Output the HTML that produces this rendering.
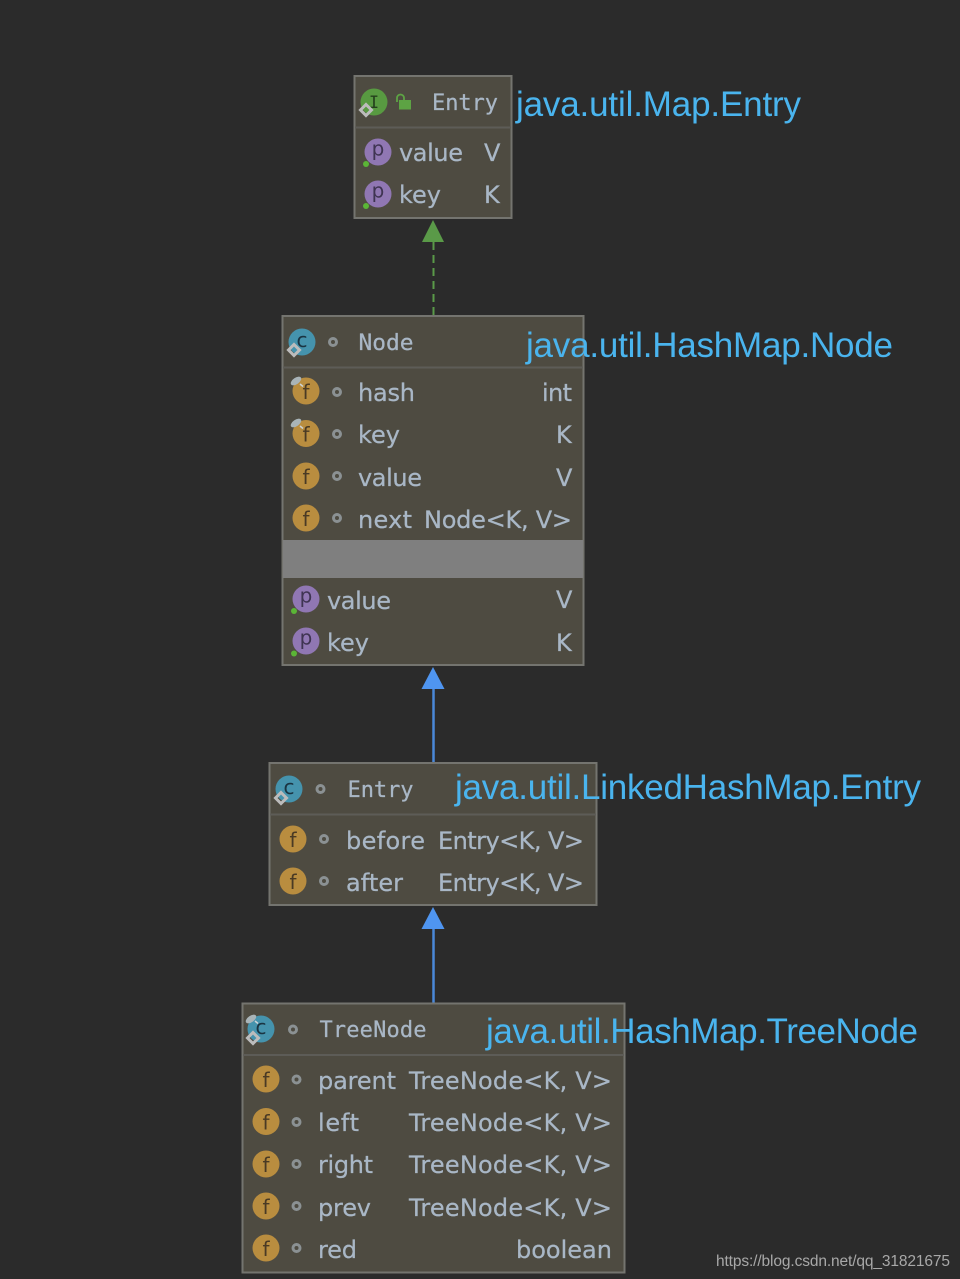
<!DOCTYPE html>
<html><head><meta charset="utf-8"><style>
html,body{margin:0;padding:0;background:#2b2b2b;width:960px;height:1279px;overflow:hidden}
svg{display:block;filter:blur(.35px)}
.t{font-family:"DejaVu Sans",sans-serif;font-size:24px;fill:#a9b7c6;stroke:#a9b7c6;stroke-width:.25}
.h{font-family:"DejaVu Sans Mono",monospace;font-size:22px;fill:#a9b7c6;stroke:#a9b7c6;stroke-width:.25}
.l{font-family:"Liberation Sans",sans-serif;font-size:35px;fill:#4ab4ee}
.w{font-family:"Liberation Sans",sans-serif;font-size:15.5px;fill:#a8a8a8}
.i{font-family:"DejaVu Sans",sans-serif;font-size:20px;text-anchor:middle}
.f{fill:#b98d3f}.p{fill:#9077b3}.c{fill:#4593ad}.g{fill:#589a41}
.if{fill:#4a3a24;transform:translateY(1px)}.ip{fill:#3f3452;transform:translateY(-2.5px)}.ic{fill:#1a3442;transform:translateY(-2px)}.ig{fill:#24401c}
.b{fill:#4e4b41;stroke:#74746f;stroke-width:2}
.s{stroke:#5d5c57;stroke-width:2}
.d{fill:none;stroke:#8b9193;stroke-width:3}
.m{fill:none;stroke:#bcbcbc;stroke-width:3}
.k{fill:#5bb536}
.n{fill:#a9b4b8}
</style></head><body>
<svg width="960" height="1279" viewBox="0 0 960 1279" xmlns="http://www.w3.org/2000/svg">
<rect width="960" height="1279" fill="#2b2b2b"/>

<!-- edges -->
<path d="M433.500 242V316" stroke="#5a9a48" stroke-width="2" stroke-dasharray="8 5" fill="none"/>
<path d="M433 220L444 242H422Z" fill="#5a9a48"/>
<path d="M433.500 689V763" stroke="#4a88d8" stroke-width="2.500" fill="none"/>
<path d="M433 667L444.500 689H421.500Z" fill="#4f95f0"/>
<path d="M433.500 929V1003" stroke="#4a88d8" stroke-width="2.500" fill="none"/>
<path d="M433 907L444.500 929H421.500Z" fill="#4f95f0"/>

<!-- Box 1 -->
<rect class="b" x="354.500" y="76" width="157" height="142"/>
<path class="s" d="M355 127.500H511"/>
<circle class="g" cx="374" cy="102" r="13.500"/>
<text class="i ig" x="374" y="108" style="font-family:'DejaVu Sans Mono',monospace;font-size:17px">I</text>
<path class="m" d="M366 104.500l5.500 5.500-5.500 5.500-5.500-5.500z"/>
<rect x="399" y="100" width="12" height="9.500" fill="#5da344"/>
<path d="M397 102v-4a3.500 3.500 0 0 1 7 0v2" fill="none" stroke="#5da344" stroke-width="1.800"/>
<text class="h" x="432" y="110" textLength="66">Entry</text>
<circle class="p" cx="378" cy="152" r="13.500"/><text class="i ip" x="378" y="158">p</text><circle class="k" cx="366" cy="164" r="3"/>
<text class="t" x="399" y="161" textLength="64">value</text><text class="t" x="484" y="161" textLength="16">V</text>
<circle class="p" cx="378" cy="194" r="13.500"/><text class="i ip" x="378" y="200">p</text><circle class="k" cx="366" cy="206" r="3"/>
<text class="t" x="399" y="203" textLength="42">key</text><text class="t" x="484" y="203" textLength="15">K</text>

<!-- Box 2 -->
<rect class="b" x="282.500" y="316" width="301" height="349"/>
<path class="s" d="M283 367.500H583"/>
<circle class="c" cx="302" cy="342" r="13.500"/><text class="i ic" x="302" y="349">c</text>
<path class="m" d="M294 344.500l5.500 5.500-5.500 5.500-5.500-5.500z"/>
<circle class="d" cx="333" cy="342" r="3.500"/>
<text class="h" x="358.500" y="350" textLength="55" lengthAdjust="spacingAndGlyphs">Node</text>

<circle class="f" cx="306" cy="391" r="13.500"/><text class="i if" x="306" y="398">f</text>
<ellipse class="n" cx="296" cy="381" rx="6" ry="3.200" transform="rotate(-35 296 381)"/><path d="M300 384l3 2.500" stroke="#cdd3d6" stroke-width="1.500"/>
<circle class="d" cx="337" cy="392" r="3.500"/>
<text class="t" x="358" y="401" textLength="57">hash</text><text class="t" x="542" y="401" textLength="30">int</text>

<circle class="f" cx="306" cy="433.500" r="13.500"/><text class="i if" x="306" y="440.500">f</text>
<ellipse class="n" cx="296" cy="423" rx="6" ry="3.200" transform="rotate(-35 296 423)"/><path d="M300 426l3 2.500" stroke="#cdd3d6" stroke-width="1.500"/>
<circle class="d" cx="337" cy="434" r="3.500"/>
<text class="t" x="358" y="443" textLength="42">key</text><text class="t" x="556" y="443" textLength="16">K</text>

<circle class="f" cx="306" cy="476" r="13.500"/><text class="i if" x="306" y="483">f</text>
<circle class="d" cx="337" cy="476" r="3.500"/>
<text class="t" x="358" y="486" textLength="64">value</text><text class="t" x="556" y="486" textLength="16">V</text>

<circle class="f" cx="306" cy="518" r="13.500"/><text class="i if" x="306" y="525">f</text>
<circle class="d" cx="337" cy="518" r="3.500"/>
<text class="t" x="358" y="528" textLength="54">next</text><text class="t" x="424" y="528" textLength="148">Node&lt;K, V&gt;</text>

<rect x="283" y="540" width="300" height="38" fill="#7f7f7f"/>

<circle class="p" cx="306" cy="599" r="13.500"/><text class="i ip" x="306" y="605">p</text><circle class="k" cx="294" cy="611" r="3"/>
<text class="t" x="327" y="609" textLength="64">value</text><text class="t" x="556" y="608" textLength="16">V</text>
<circle class="p" cx="306" cy="641" r="13.500"/><text class="i ip" x="306" y="647">p</text><circle class="k" cx="294" cy="653.500" r="3"/>
<text class="t" x="327" y="651" textLength="42">key</text><text class="t" x="556" y="651" textLength="16">K</text>

<!-- Box 3 -->
<rect class="b" x="269.500" y="763" width="327" height="142"/>
<path class="s" d="M270 814.500H596"/>
<circle class="c" cx="289" cy="789" r="13.500"/><text class="i ic" x="289" y="796">c</text>
<path class="m" d="M281 792.500l5.500 5.500-5.500 5.500-5.500-5.500z"/>
<circle class="d" cx="320.500" cy="789" r="3.500"/>
<text class="h" x="347.500" y="797" textLength="66">Entry</text>

<circle class="f" cx="293" cy="839" r="13.500"/><text class="i if" x="293" y="846">f</text>
<circle class="d" cx="324" cy="839" r="3.500"/>
<text class="t" x="346" y="849" textLength="79">before</text><text class="t" x="438" y="849" textLength="146">Entry&lt;K, V&gt;</text>
<circle class="f" cx="293" cy="881" r="13.500"/><text class="i if" x="293" y="888">f</text>
<circle class="d" cx="324" cy="881" r="3.500"/>
<text class="t" x="346" y="891" textLength="57">after</text><text class="t" x="438" y="891" textLength="146">Entry&lt;K, V&gt;</text>

<!-- Box 4 -->
<rect class="b" x="242.500" y="1003.500" width="382" height="269"/>
<path class="s" d="M243 1055H624"/>
<circle class="c" cx="261" cy="1029" r="13.500"/><text class="i ic" x="261" y="1036">c</text>
<ellipse class="n" cx="251" cy="1019" rx="6" ry="3.200" transform="rotate(-35 251 1019)"/><path d="M255 1021l3 2.500" stroke="#cdd3d6" stroke-width="1.500"/>
<path class="m" d="M253 1032.500l5.500 5.500-5.500 5.500-5.500-5.500z"/>
<circle class="d" cx="293" cy="1029.500" r="3.500"/>
<text class="h" x="319.500" y="1037" textLength="107">TreeNode</text>

<circle class="f" cx="266" cy="1079" r="13.500"/><text class="i if" x="266" y="1086">f</text>
<circle class="d" cx="296.500" cy="1079.500" r="3.500"/>
<text class="t" x="318" y="1089" textLength="78">parent</text><text class="t" x="409" y="1089" textLength="203">TreeNode&lt;K, V&gt;</text>
<circle class="f" cx="266" cy="1121.500" r="13.500"/><text class="i if" x="266" y="1128.500">f</text>
<circle class="d" cx="296.500" cy="1122" r="3.500"/>
<text class="t" x="318" y="1131" textLength="41">left</text><text class="t" x="409" y="1131" textLength="203">TreeNode&lt;K, V&gt;</text>
<circle class="f" cx="266" cy="1164" r="13.500"/><text class="i if" x="266" y="1171">f</text>
<circle class="d" cx="296.500" cy="1164" r="3.500"/>
<text class="t" x="318" y="1173" textLength="55">right</text><text class="t" x="409" y="1173" textLength="203">TreeNode&lt;K, V&gt;</text>
<circle class="f" cx="266" cy="1206" r="13.500"/><text class="i if" x="266" y="1213">f</text>
<circle class="d" cx="296.500" cy="1206" r="3.500"/>
<text class="t" x="318" y="1216" textLength="53">prev</text><text class="t" x="409" y="1216" textLength="203">TreeNode&lt;K, V&gt;</text>
<circle class="f" cx="266" cy="1248" r="13.500"/><text class="i if" x="266" y="1255">f</text>
<circle class="d" cx="296.500" cy="1248" r="3.500"/>
<text class="t" x="318" y="1258" textLength="39">red</text><text class="t" x="516" y="1258" textLength="96">boolean</text>

<!-- Labels -->
<text class="l" x="516" y="116" textLength="285">java.util.Map.Entry</text>
<text class="l" x="526" y="357" textLength="367">java.util.HashMap.Node</text>
<text class="l" x="455" y="799" textLength="466">java.util.LinkedHashMap.Entry</text>
<text class="l" x="486" y="1043" textLength="432">java.util.HashMap.TreeNode</text>
<text class="w" x="716" y="1266" textLength="234">https://blog.csdn.net/qq_31821675</text>
</svg>
</body></html>
